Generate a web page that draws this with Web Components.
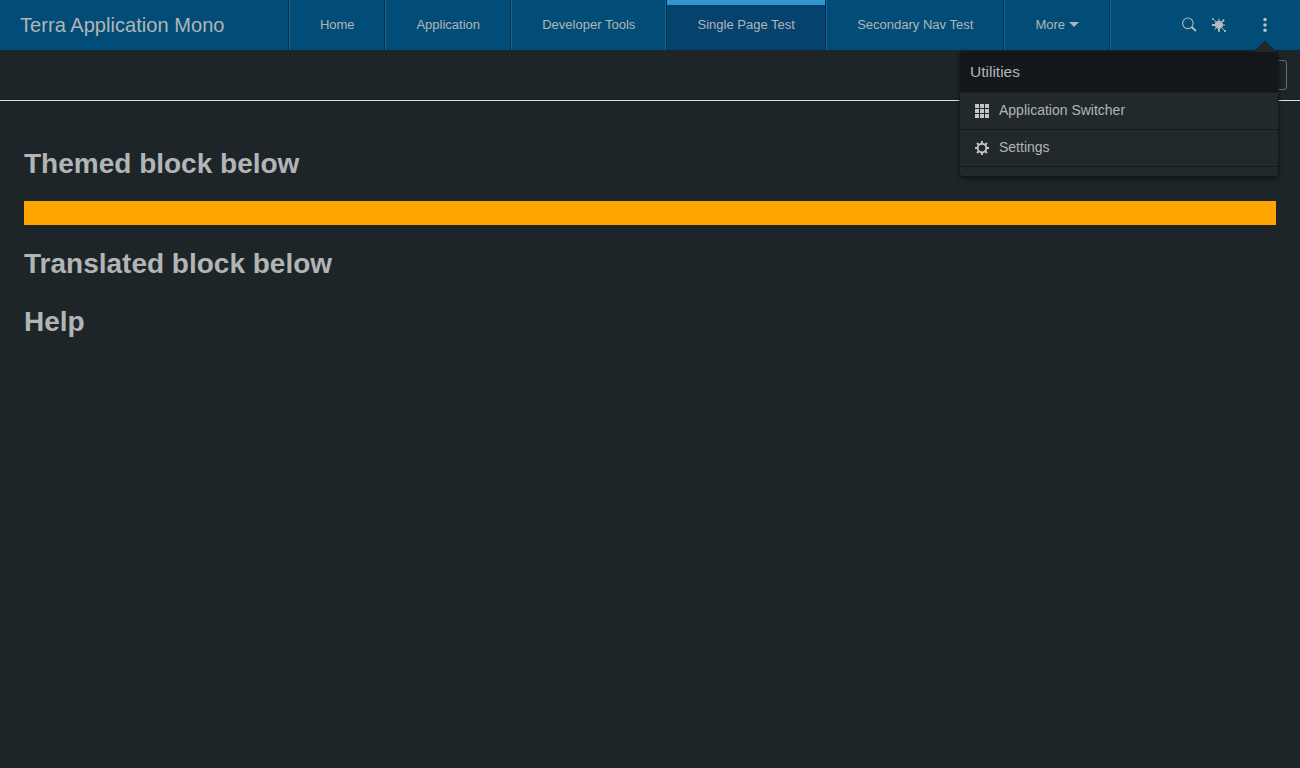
<!DOCTYPE html>
<html lang="en">
<head>
<meta charset="utf-8">
<title>Terra Application Mono</title>
<style>
html,body{margin:0;height:100%;overflow:hidden;background:#1e2528}
body{font-family:"Liberation Sans",Arial,sans-serif;color:#b2b5b6}
</style>
</head>
<body>
<terra-app></terra-app>
<script>
const define = (name, html) => customElements.define(name, class extends HTMLElement {
  constructor() {
    super();
    const t = document.createElement('template');
    t.innerHTML = html;
    this.attachShadow({mode: 'open'}).append(t.content.cloneNode(true));
  }
});

define('nav-tab', `<style>
:host{display:flex;box-sizing:border-box;height:50px;width:var(--w);align-items:center;justify-content:center;
 font-size:13.02px;line-height:18px;padding:0 0 1px .5px;white-space:nowrap;
 border-left:1px solid var(--edge,#006298);border-right:1px solid var(--end,#062f44)}
:host([active]){background:#05426e;border-left-color:#062f44;box-shadow:inset 0 5px #3496cf}
</style><slot></slot>`);

define('app-header', `<style>
:host{display:flex;height:50px;background:#024d77;box-sizing:border-box}
.title{box-sizing:border-box;width:289px;padding-left:20px;line-height:50px;font-size:20.02px;letter-spacing:.04px;border-right:1px solid #062f44;white-space:nowrap}
nav{display:flex;border-right:1px solid #0968a3}
.tools{display:flex;flex:1;justify-content:flex-end;align-items:center;padding:0 33px 1px 0}
svg{display:block}
.bug{margin:1px 37px 0 15px}
.caret{margin:0 0 0 4px}
</style>
<div class="title">Terra Application Mono</div>
<nav>
<nav-tab style="--w:96px;--edge:#146591">Home</nav-tab>
<nav-tab style="--w:126px;--edge:#146591">Application</nav-tab>
<nav-tab style="--w:155px;--edge:#146591;--end:#146591">Developer Tools</nav-tab>
<nav-tab active style="--w:160px">Single Page Test</nav-tab>
<nav-tab style="--w:178px;--edge:#0968a3">Secondary Nav Test</nav-tab>
<nav-tab style="--w:106px;--edge:#0968a3">More<svg class="caret" width="10" height="5" viewBox="0 0 10 5"><path d="M0 0h10L5 5z" fill="#b2b5b6"/></svg></nav-tab>
</nav>
<div class="tools">
<svg width="15" height="15" viewBox="0 0 15 15" fill="none" stroke="#b5babd"><circle cx="5.9" cy="6.3" r="5.3" stroke-width="1.1"/><path d="M9.6 10l4.3 4" stroke-width="1.9"/></svg>
<svg class="bug" width="14" height="14" viewBox="0 0 14 14" fill="#b5babd" stroke="#b5babd"><circle cx="6.9" cy="6.8" r="4.1" stroke="none"/><path d="M7 .6v13M.4 7h12.8M1 1l3.5 3.5M9.5 9.5l3.3 3.3M11.2 2.7L9.5 4.4M4.5 9.5l-2 2" stroke-width="1"/><circle cx="1" cy="1" r=".5"/><circle cx="11.3" cy="2.5" r=".8"/><circle cx="13" cy="13" r=".7"/><path d="M7 11v2.8M0 7h3" stroke-width="1.8"/></svg>
<svg width="4" height="15" viewBox="0 0 4 15" fill="#bfc2c3"><circle cx="2" cy="2.5" r="1.75"/><circle cx="2" cy="8" r="1.75"/><circle cx="2" cy="13.2" r="1.75"/></svg>
</div>`);

define('page-toolbar', `<style>
:host{display:flex;justify-content:flex-end;align-items:center;box-sizing:border-box;height:51px;padding:0 13px 0 0;border-bottom:1px solid #dedfe0}
.b{width:110px;height:30px;box-sizing:border-box;border:1px solid #696d6f;border-radius:3px}
</style><div class="b"></div>`);

define('page-heading', `<style>
:host{display:block}h1{margin:0;font-size:28px;line-height:34px;font-weight:bold}
</style><h1><slot></slot></h1>`);

define('page-content', `<style>
:host{display:flex;flex-direction:column;gap:24px;padding:46px 24px 0}
.block{height:24px;background:#ffa500;margin-top:-4px;margin-bottom:-2px}
</style>
<page-heading>Themed block below</page-heading>
<div class="block"></div>
<page-heading>Translated block below</page-heading>
<page-heading>Help</page-heading>`);

define('menu-item', `<style>
:host{display:flex;align-items:center;box-sizing:border-box;height:37px;padding:0 15px;border-bottom:1px solid #161a1d;font-size:14px}
.t{padding:0 0 2px 10px;line-height:18px}
::slotted(svg){display:block}
</style><slot name="icon"></slot><span class="t"><slot></slot></span>`);

define('utility-menu', `<style>
:host{position:absolute;left:960px;top:52px;width:318px;height:124px}
.box{height:100%;background:#22292c;border-radius:3px;overflow:hidden;box-shadow:0 0 0 1px rgba(20,25,28,.55),0 2px 5px rgba(0,0,0,.65)}
.head{box-sizing:border-box;height:41px;padding:0 10px;background:#13171a;border-bottom:1px solid #1a1f22;font-size:15.5px;line-height:40px}
.arrow{position:absolute;left:294px;top:-12px}
</style>
<div class="box">
<div class="head">Utilities</div>
<menu-item><svg slot="icon" width="14" height="14" fill="#c2c4c5"><path d="M0 0h4v4H0zM5 0h4v4H5zM10 0h4v4h-4zM0 5h4v4H0zM5 5h4v4H5zM10 5h4v4h-4zM0 10h4v4H0zM5 10h4v4H5zM10 10h4v4h-4z"/></svg>Application Switcher</menu-item>
<menu-item><svg slot="icon" width="14" height="14" viewBox="0 0 14 14" fill="none" stroke="#c2c4c5"><circle cx="7" cy="7" r="4.3" stroke-width="1.9"/><path d="M7 0v2.5M7 11.5V14M0 7h2.5M11.5 7H14M2 2l1.8 1.8M10.2 10.2L12 12M12 2l-1.8 1.8M3.8 10.2L2 12" stroke-width="1.9"/></svg>Settings</menu-item>
</div>
<svg class="arrow" width="22" height="12" viewBox="0 0 22 12"><path d="M0 12L11 1l11 11z" fill="#22292c"/><path d="M0 12L11 1l11 11" fill="none" stroke="#14232c"/></svg>`);

define('terra-app', `<style>
:host{display:block;position:relative;height:768px;overflow:hidden;background:#1e2528}
</style>
<app-header></app-header>
<page-toolbar></page-toolbar>
<page-content></page-content>
<utility-menu></utility-menu>`);
</script>
</body>
</html>
